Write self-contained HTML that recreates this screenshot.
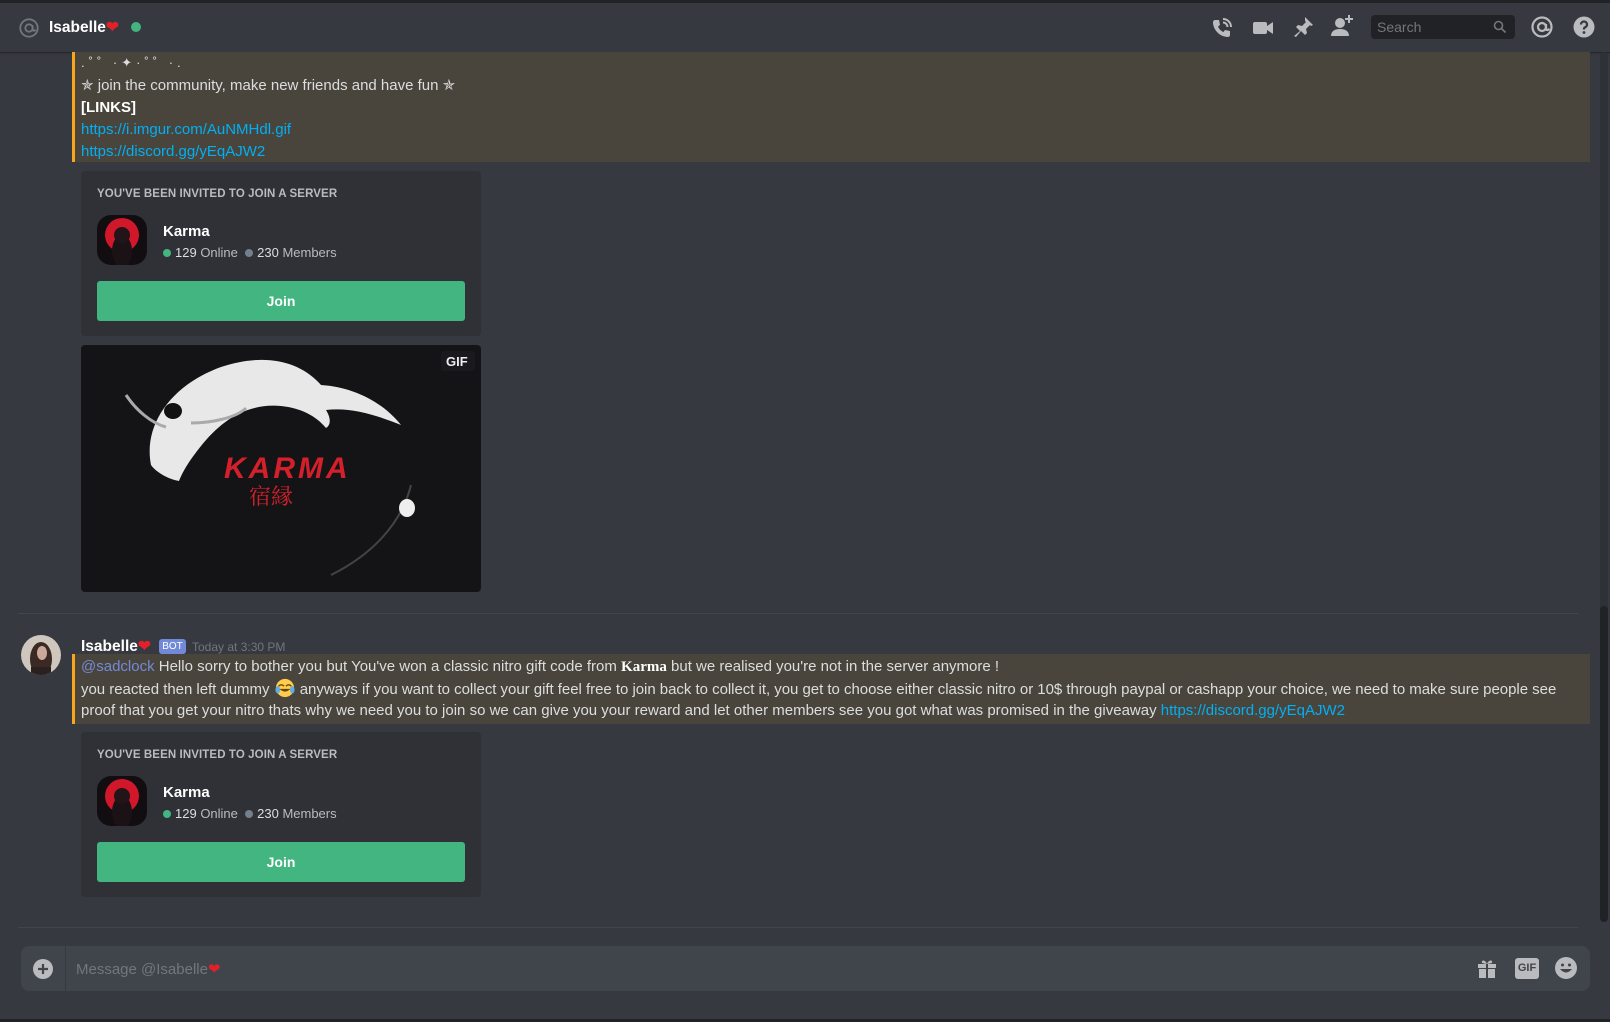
<!DOCTYPE html>
<html><head><meta charset="utf-8">
<style>
*{box-sizing:border-box;margin:0;padding:0}
body{width:1610px;height:1022px;background:#36393f;font-family:"Liberation Sans","Noto Sans CJK JP",sans-serif;color:#dcddde;position:relative;overflow:hidden}
.abs{position:absolute}
.top{left:0;top:0;width:1610px;height:3px;background:#202225}
.hdr{left:0;top:3px;width:1610px;height:49px;background:#36393f;box-shadow:0 1px 0 rgba(4,4,5,.25),0 2px 2px rgba(0,0,0,.1)}
.hl{background:#4a453c;border-left:3px solid #faa61a}
.t{font-size:15px;line-height:22px;white-space:nowrap;color:#dcddde}
a,.lk{color:#00b0f4;text-decoration:none}
.card{background:#2f3136;border-radius:4px;width:400px;height:165px}
.card .h{position:absolute;left:16px;top:17px;font-size:11.5px;font-weight:bold;color:#b9bbbe;letter-spacing:.1px}
.card .ic{position:absolute;left:16px;top:44px;width:50px;height:50px;border-radius:14px;background:#120d10;overflow:hidden}
.card .nm{position:absolute;left:82px;top:52px;font-size:15px;font-weight:bold;color:#fff}
.card .st{position:absolute;left:82px;top:74px;font-size:13px;color:#b9bbbe;white-space:nowrap}
.card .st b{color:#dcddde;font-weight:normal}
.dot{display:inline-block;width:8px;height:8px;border-radius:50%;margin-right:4px;vertical-align:0px}
.btn{position:absolute;left:16px;top:110px;width:368px;height:40px;background:#43b581;border-radius:3px;color:#fff;font-size:14px;font-weight:bold;text-align:center;line-height:40px}
.sep{height:1px;background:#42454a}
</style></head><body>
<div class="abs top"></div>
<div class="abs hdr"></div>
<svg class="abs" style="left:18px;top:17px" width="22" height="22" viewBox="0 0 24 24"><circle cx="12" cy="12" r="9.5" fill="none" stroke="#72767d" stroke-width="2"/><circle cx="12" cy="12" r="4" fill="none" stroke="#72767d" stroke-width="2"/><path d="M16 9v4.5c0 2 2.5 2 3 0" fill="none" stroke="#72767d" stroke-width="2"/></svg>
<div class="abs" style="left:49px;top:18px;font-size:15.5px;font-weight:bold;color:#fff">Isabelle<span style="color:#e0202a">❤</span></div>
<div class="abs" style="left:131px;top:22px;width:10px;height:10px;border-radius:50%;background:#43b581"></div>
<svg class="abs" style="left:1210px;top:16px" width="24" height="24" viewBox="0 0 24 24" fill="#b9bbbe"><path d="M5 4l4 0 1 5-2 1.5c1 2.5 3 4.5 5.5 5.5L15 14l5 1v4c0 1-1 2-2 2C10 21 3 14 3 6c0-1 1-2 2-2z"/><path d="M13 3a8 8 0 0 1 8 8M13 6.5a4.5 4.5 0 0 1 4.5 4.5" stroke="#b9bbbe" stroke-width="2" fill="none"/></svg>
<svg class="abs" style="left:1251px;top:16px" width="24" height="24" viewBox="0 0 24 24" fill="#b9bbbe"><rect x="2" y="6" width="14" height="12" rx="2"/><path d="M16 10l6-4v12l-6-4z"/></svg>
<svg class="abs" style="left:1291px;top:15px" width="24" height="24" viewBox="0 0 24 24" fill="#b9bbbe"><path d="M14 2l8 8-2 1-1-1-4 4 1 4-2 2-4-4-5 6-2-1 6-5-4-4 2-2 4 1 4-4-1-1z"/></svg>
<svg class="abs" style="left:1330px;top:13px" width="26" height="26" viewBox="0 0 26 26" fill="#b9bbbe"><circle cx="10" cy="10" r="5"/><path d="M1 23c0-5 4-7 9-7s9 2 9 7z"/><path d="M19 2v8M15 6h8" stroke="#b9bbbe" stroke-width="2"/></svg>
<div class="abs" style="left:1371px;top:15px;width:144px;height:24px;background:#202225;border-radius:4px;font-size:14px;color:#72767d;padding:4px 0 0 6px">Search</div>
<svg class="abs" style="left:1493px;top:20px" width="14" height="14" viewBox="0 0 14 14"><circle cx="5.5" cy="5.5" r="4" fill="none" stroke="#72767d" stroke-width="1.6"/><path d="M8.5 8.5l4 4" stroke="#72767d" stroke-width="1.8"/></svg>
<svg class="abs" style="left:1530px;top:15px" width="24" height="24" viewBox="0 0 24 24"><circle cx="12" cy="12" r="9.5" fill="none" stroke="#b9bbbe" stroke-width="2.2"/><circle cx="12" cy="12" r="4" fill="none" stroke="#b9bbbe" stroke-width="2.2"/><path d="M16 9v4.5c0 2 2.5 2 3 0" fill="none" stroke="#b9bbbe" stroke-width="2.2"/></svg>
<svg class="abs" style="left:1572px;top:15px" width="24" height="24" viewBox="0 0 24 24"><circle cx="12" cy="12" r="10.5" fill="#b9bbbe"/><path d="M9 9.5a3 3 0 1 1 4 2.8c-1 .4-1 1-1 2.2" fill="none" stroke="#36393f" stroke-width="2.3"/><circle cx="12" cy="17.5" r="1.4" fill="#36393f"/></svg>

<div class="abs hl" style="left:72px;top:52px;width:1518px;height:110px"></div>
<div class="abs t" style="left:81px;top:52px;font-size:13px;letter-spacing:4px">.˚˚ ·✦·˚˚ ·.</div>
<div class="abs t" style="left:81px;top:75px">✯ join the community, make new friends and have fun ✯</div>
<div class="abs t" style="left:81px;top:97px;font-weight:bold;color:#fff">[LINKS]</div>
<div class="abs t lk" style="left:81px;top:119px">https://i.imgur.com/AuNMHdl.gif</div>
<div class="abs t lk" style="left:81px;top:141px">https://discord.gg/yEqAJW2</div>

<div class="abs card" style="left:81px;top:171px">
<div class="h">YOU'VE BEEN INVITED TO JOIN A SERVER</div>
<div class="ic"><svg width="50" height="50"><circle cx="25" cy="20" r="17" fill="#d0182a"/><ellipse cx="25" cy="36" rx="10" ry="16" fill="#1b1215"/><circle cx="25" cy="20" r="8" fill="#221418"/></svg></div>
<div class="nm">Karma</div>
<div class="st"><span class="dot" style="background:#43b581"></span><b>129</b> Online &nbsp;<span class="dot" style="background:#747f8d"></span><b>230</b> Members</div>
<div class="btn">Join</div>
</div>

<div class="abs" style="left:81px;top:345px;width:400px;height:247px;background:#141316;border-radius:4px;overflow:hidden">
<svg width="400" height="247" viewBox="0 0 400 247">
<path d="M70 120c-8-40 20-80 70-98 45-15 80-5 100 18 30 2 60 15 80 40-25-10-50-18-75-15 5 8 5 15 0 18-10-12-25-20-45-22-35-3-60 15-80 40-12 15-18 25-22 35-12-2-24-10-28-16z" fill="#e8e8e8"/>
<ellipse cx="92" cy="66" rx="9" ry="8" fill="#111"/>
<path d="M45 50c10 15 25 28 40 32M110 78c20 0 45-5 55-15" stroke="#aaa" stroke-width="3" fill="none"/>
<path d="M250 230c40-20 70-50 80-90" stroke="#444" stroke-width="2" fill="none"/>
<ellipse cx="326" cy="163" rx="8" ry="9" fill="#eee"/>
<text x="143" y="133" font-family="Liberation Sans" font-weight="bold" font-style="italic" font-size="30" fill="#d4202b" letter-spacing="3">KARMA</text>
<text x="168" y="159" font-family="Noto Serif CJK SC,serif" font-size="22" fill="#d4202b">宿縁</text>
<rect x="360" y="6" width="34" height="20" rx="3" fill="#1a1a1e"/>
<text x="365" y="21" font-family="Liberation Sans" font-weight="bold" font-size="13" fill="#eee">GIF</text>
</svg></div>

<div class="abs sep" style="left:18px;top:613px;width:1560px"></div>

<svg class="abs" style="left:21px;top:635px" width="40" height="40"><defs><clipPath id="c"><circle cx="20" cy="20" r="20"/></clipPath></defs><g clip-path="url(#c)"><rect width="40" height="40" fill="#cfc6bd"/><ellipse cx="20" cy="24" rx="11" ry="17" fill="#3b2a24"/><ellipse cx="21" cy="18" rx="5" ry="7" fill="#caa99a"/><rect x="10" y="32" width="20" height="10" fill="#2a2020"/></g></svg>
<div class="abs" style="left:81px;top:637px;font-size:15.5px;font-weight:bold;color:#fff;white-space:nowrap">Isabelle<span style="color:#e0202a">❤</span></div>
<div class="abs" style="left:159px;top:639px;width:27px;height:15px;background:#7289da;border-radius:3px;color:#fff;font-size:10px;text-align:center;line-height:15px">BOT</div>
<div class="abs" style="left:192px;top:640px;font-size:12px;color:#72767d">Today at 3:30 PM</div>
<div class="abs hl" style="left:72px;top:654px;width:1518px;height:70px"></div>
<div class="abs t" style="left:81px;top:656px"><span style="color:#7289da">@sadclock</span> Hello sorry to bother you but You've won a classic nitro gift code from <b style="font-family:'Liberation Serif',serif;color:#fff">Karma</b> but we realised you're not in the server anymore !</div>
<div class="abs t" style="left:81px;top:678px;letter-spacing:-0.03px">you reacted then left dummy <svg width="22" height="20" viewBox="0 0 22 22" style="vertical-align:-4px"><circle cx="11" cy="11" r="10" fill="#ffcc4d"/><path d="M5 12q6 6 12 0z" fill="#664500"/><path d="M4 9q3-3 6 0M12 9q3-3 6 0" stroke="#664500" stroke-width="1.5" fill="none"/><ellipse cx="3" cy="13" rx="2.5" ry="4" fill="#5dadec"/><ellipse cx="19" cy="13" rx="2.5" ry="4" fill="#5dadec"/></svg> anyways if you want to collect your gift feel free to join back to collect it, you get to choose either classic nitro or 10$ through paypal or cashapp your choice, we need to make sure people see</div>
<div class="abs t" style="left:81px;top:700px">proof that you get your nitro thats why we need you to join so we can give you your reward and let other members see you got what was promised in the giveaway <span class="lk">https://discord.gg/yEqAJW2</span></div>

<div class="abs card" style="left:81px;top:732px">
<div class="h">YOU'VE BEEN INVITED TO JOIN A SERVER</div>
<div class="ic"><svg width="50" height="50"><circle cx="25" cy="20" r="17" fill="#d0182a"/><ellipse cx="25" cy="36" rx="10" ry="16" fill="#1b1215"/><circle cx="25" cy="20" r="8" fill="#221418"/></svg></div>
<div class="nm">Karma</div>
<div class="st"><span class="dot" style="background:#43b581"></span><b>129</b> Online &nbsp;<span class="dot" style="background:#747f8d"></span><b>230</b> Members</div>
<div class="btn">Join</div>
</div>

<div class="abs sep" style="left:18px;top:927px;width:1560px"></div>

<div class="abs" style="left:1600px;top:52px;width:8px;height:870px;background:#2e3136;border-radius:4px"></div>
<div class="abs" style="left:1600px;top:606px;width:8px;height:316px;background:#202225;border-radius:4px"></div>

<div class="abs" style="left:21px;top:946px;width:1569px;height:45px;background:#40444b;border-radius:8px"></div>
<div class="abs" style="left:65px;top:946px;width:1px;height:45px;background:#36393f"></div>
<svg class="abs" style="left:32px;top:958px" width="22" height="22" viewBox="0 0 22 22"><circle cx="11" cy="11" r="10" fill="#b9bbbe"/><path d="M11 6v10M6 11h10" stroke="#40444b" stroke-width="2.2"/></svg>
<div class="abs" style="left:76px;top:960px;font-size:15px;color:#72767d">Message @Isabelle<span style="color:#e0202a">❤</span></div>
<svg class="abs" style="left:1476px;top:957px" width="22" height="22" viewBox="0 0 22 22" fill="#b9bbbe"><rect x="2" y="7" width="18" height="4"/><rect x="3" y="12" width="16" height="9"/><path d="M11 7C9 2 5 3 6 6zM11 7c2-5 6-4 5-1z"/><rect x="10" y="7" width="2" height="14" fill="#40444b"/></svg>
<div class="abs" style="left:1515px;top:958px;width:24px;height:21px;background:#b9bbbe;border-radius:3px;font-size:11px;font-weight:bold;color:#40444b;text-align:center;line-height:21px">GIF</div>
<svg class="abs" style="left:1555px;top:957px" width="22" height="22" viewBox="0 0 22 22"><circle cx="11" cy="11" r="11" fill="#b9bbbe"/><circle cx="7.5" cy="8" r="1.5" fill="#40444b"/><circle cx="14.5" cy="8" r="1.5" fill="#40444b"/><path d="M5 12q6 7 12 0z" fill="#40444b"/></svg>
<div class="abs" style="left:0;top:1019px;width:1610px;height:3px;background:#202225"></div>
</body></html>
